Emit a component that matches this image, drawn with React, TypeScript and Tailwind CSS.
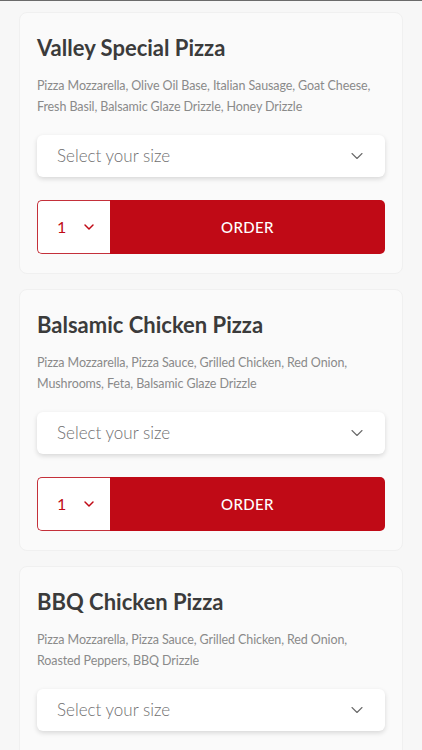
import { ChevronDown } from "lucide-react";

const pizzas = [
  {
    name: "Valley Special Pizza",
    toppings:
      "Pizza Mozzarella, Olive Oil Base, Italian Sausage, Goat Cheese, Fresh Basil, Balsamic Glaze Drizzle, Honey Drizzle",
  },
  {
    name: "Balsamic Chicken Pizza",
    toppings:
      "Pizza Mozzarella, Pizza Sauce, Grilled Chicken, Red Onion, Mushrooms, Feta, Balsamic Glaze Drizzle",
  },
  {
    name: "BBQ Chicken Pizza",
    toppings: "Pizza Mozzarella, Pizza Sauce, Grilled Chicken, Red Onion, Roasted Peppers, BBQ Drizzle",
  },
];

function PizzaCard({ name, toppings }: { name: string; toppings: string }) {
  return (
    <div className="rounded-lg border border-[#f0f0f0] bg-[#fafafa] px-[17px] pt-[21px] pb-[19px]">
      <h2 className="text-[22px] leading-[28px] font-bold text-[#3b3b3b]">{name}</h2>
      <p className="mt-[13px] text-[12.5px] leading-[21px] tracking-[-0.1px] text-[#8a8a8a]">{toppings}</p>

      {/* size picker */}
      <button className="mt-[18px] flex h-[42px] w-full items-center justify-between rounded-md bg-white pl-[20px] pr-[18px] shadow-[0_2px_5px_rgba(0,0,0,0.14)]">
        <span className="text-[17px] font-light text-[#6f6f6f]">Select your size</span>
        <ChevronDown size={20} strokeWidth={1.3} className="text-[#6a6a6a]" />
      </button>

      <div className="mt-[23px] flex h-[54px]">
        <div className="flex w-[73px] items-center gap-[15px] rounded-l-[5px] border border-r-0 border-[#c4303a] bg-white pl-[19px]">
          <span className="text-[16px] text-[#c00a16]">1</span>
          <ChevronDown size={16} strokeWidth={2.2} className="text-[#c00a16]" />
        </div>
        <button className="flex flex-1 items-center justify-center rounded-r-[5px] bg-[#c00a16] text-[15px] font-medium tracking-wide text-white">
          ORDER
        </button>
      </div>
    </div>
  );
}

export default function App() {
  return (
    <div
      className="min-h-[750px] border-t border-[#6b6b6b] bg-[#f7f7f7] px-[19px] pt-[11px]"
      style={{ fontFamily: "Lato, 'Noto Sans', sans-serif" }}
    >
      <div className="flex flex-col gap-[15px]">
        {pizzas.map((p) => (
          <PizzaCard key={p.name} {...p} />
        ))}
      </div>
    </div>
  );
}
